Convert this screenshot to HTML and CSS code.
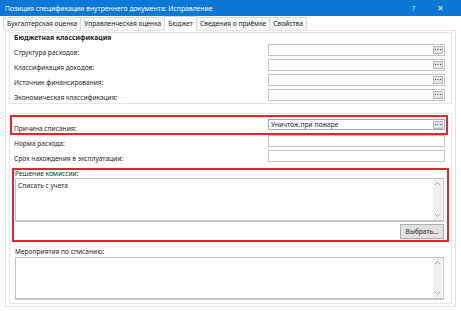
FILE: index.html
```html
<!DOCTYPE html>
<html lang="ru">
<head>
    <meta charset="UTF-8">
    <title>Позиция спецификации внутреннего документа: Исправление</title>
    <link rel="stylesheet" href="styles.css">
</head>
<body>

    <!-- Title bar -->
    <div class="titlebar">
        <span class="title">Позиция спецификации внутреннего документа: Исправление</span>
        <span class="help">?</span>
        <span class="close">✕</span>
    </div>

    <!-- Tabs -->
    <div class="tabs">
        <span class="tab">Бухгалтерская оценка</span>
        <span class="tab">Управленческая оценка</span>
        <span class="tab active">Бюджет</span>
        <span class="tab">Сведения о приёмке</span>
        <span class="tab">Свойства</span>
    </div>

    <div class="panel">

        <!-- Budget classification -->
        <div class="group">
            <div class="group-title">Бюджетная классификация</div>
            <div class="row">
                <span class="label">Структура расходов:</span>
                <div class="field"><span class="value"></span><span class="dots"><svg width="6" height="2" viewBox="0 0 6 2"><rect x="0" y="0" width="1" height="1" fill="#444"/><rect x="2.5" y="0" width="1" height="1" fill="#444"/><rect x="5" y="0" width="1" height="1" fill="#444"/></svg></span></div>
            </div>
            <div class="row">
                <span class="label">Классификация доходов:</span>
                <div class="field"><span class="value"></span><span class="dots"><svg width="6" height="2" viewBox="0 0 6 2"><rect x="0" y="0" width="1" height="1" fill="#444"/><rect x="2.5" y="0" width="1" height="1" fill="#444"/><rect x="5" y="0" width="1" height="1" fill="#444"/></svg></span></div>
            </div>
            <div class="row">
                <span class="label">Источник финансирования:</span>
                <div class="field"><span class="value"></span><span class="dots"><svg width="6" height="2" viewBox="0 0 6 2"><rect x="0" y="0" width="1" height="1" fill="#444"/><rect x="2.5" y="0" width="1" height="1" fill="#444"/><rect x="5" y="0" width="1" height="1" fill="#444"/></svg></span></div>
            </div>
            <div class="row">
                <span class="label">Экономическая классификация:</span>
                <div class="field"><span class="value"></span><span class="dots"><svg width="6" height="2" viewBox="0 0 6 2"><rect x="0" y="0" width="1" height="1" fill="#444"/><rect x="2.5" y="0" width="1" height="1" fill="#444"/><rect x="5" y="0" width="1" height="1" fill="#444"/></svg></span></div>
            </div>
        </div>

        <!-- Write-off -->
        <div class="group group-main">
            <div class="mark mark-reason">
                <div class="row row-reason">
                    <span class="label">Причина списания:</span>
                    <div class="field focused"><span class="value">Уничтож.при пожаре</span><span class="dots"><svg width="6" height="2" viewBox="0 0 6 2"><rect x="0" y="0" width="1" height="1" fill="#444"/><rect x="2.5" y="0" width="1" height="1" fill="#444"/><rect x="5" y="0" width="1" height="1" fill="#444"/></svg></span></div>
                </div>
            </div>
            <div class="row row-plain">
                <span class="label">Норма расхода:</span>
                <div class="field"></div>
            </div>
            <div class="row row-plain">
                <span class="label">Срок нахождения в эксплуатации:</span>
                <div class="field"></div>
            </div>

            <div class="mark mark-decision">
                <div class="caption">Решение комиссии:</div>
                <div class="memo memo-decision">
                    <span class="memo-text">Списать с учета</span>
                    <div class="scroll">
                        <svg width="7" height="5" viewBox="0 0 7 5"><path d="M1 4 L3.5 1.5 L6 4" fill="none" stroke="#a8a8a8" stroke-width="1"/></svg>
                        <svg width="7" height="5" viewBox="0 0 7 5"><path d="M1 1 L3.5 3.5 L6 1" fill="none" stroke="#a8a8a8" stroke-width="1"/></svg>
                    </div>
                </div>
                <div class="actions">
                    <button class="pick">Выбрать...</button>
                </div>
            </div>

            <div class="caption caption-events">Мероприятия по списанию:</div>
            <div class="memo memo-events">
                <span class="memo-text"></span>
                <div class="scroll">
                    <svg width="7" height="5" viewBox="0 0 7 5"><path d="M1 4 L3.5 1.5 L6 4" fill="none" stroke="#a8a8a8" stroke-width="1"/></svg>
                    <svg width="7" height="5" viewBox="0 0 7 5"><path d="M1 1 L3.5 3.5 L6 1" fill="none" stroke="#a8a8a8" stroke-width="1"/></svg>
                </div>
            </div>
        </div>

    </div>

</body>
</html>
```

FILE: styles.css
```css
body {
    margin: 0;
    font-family: "Noto Sans", sans-serif;
    font-size: 6.6px;
    color: #262626;
    background: #ffffff;
}

/* Title bar */
.titlebar {
    height: 16px;
    display: flex;
    align-items: center;
    padding: 0 0 0 5px;
    background: #0b78d5;
    color: #ffffff;
    font-size: 6.8px;
}

.help {
    margin-left: auto;
    width: 27px;
    text-align: center;
    color: #cfe3f6;
    font-size: 7.5px;
}

.close {
    width: 27px;
    text-align: center;
    margin-right: 7px;
    color: #e6f0fa;
    font-size: 7.5px;
}

/* Tabs */
.tabs {
    height: 14px;
    display: flex;
    align-items: flex-end;
    padding-left: 3px;
}

.tab {
    height: 12px;
    line-height: 12px;
    padding: 0 3px;
    border: 1px solid #d9d9d9;
    border-bottom: none;
    margin-right: -1px;
    background: #f5f5f5;
    white-space: nowrap;
}

.tab.active {
    height: 14px;
    line-height: 14px;
    background: #ffffff;
    position: relative;
    z-index: 1;
    margin-bottom: -1px;
}

/* Content */
.panel {
    margin: 0 5px;
    padding: 1px 3px 2px;
    border: 1px solid #e3e3e3;
}

.group {
    border: 1px solid #e6e6e6;
}

.group-title {
    height: 10px;
    line-height: 10px;
    padding-left: 4px;
    font-weight: bold;
    font-size: 6.8px;
    color: #1e1e1e;
}

.row {
    display: flex;
    align-items: flex-start;
    height: 15px;
    padding: 0 6px 0 4px;
}

.label {
    flex: 1;
    padding-top: 4px;
    line-height: 11px;
    white-space: nowrap;
}

.field {
    width: 177px;
    height: 12px;
    margin-top: 1px;
    box-sizing: border-box;
    border: 1px solid #c4c4c4;
    display: flex;
    align-items: center;
}

.value {
    flex: 1;
    padding-left: 2px;
    line-height: 10px;
}

.dots {
    width: 10px;
    height: 8px;
    margin-right: 1px;
    box-sizing: border-box;
    background: #e4e4e4;
    border: 1px solid #b8b8b8;
    display: flex;
    align-items: center;
    justify-content: center;
}

.dots svg {
    display: block;
}

.field.focused {
    border-color: #7fb3e6;
}

.group-main {
    margin-top: 9px;
    padding: 1px 0 3px;
}

/* Red highlight frames */
.mark {
    border: 2px solid #e3262f;
}

.mark-reason {
    margin-right: 3px;
}

.row-reason {
    height: 16px;
    padding: 0 1px 0 2px;
}

.row-reason .label {
    padding-top: 6px;
}

.row-reason .field {
    margin-top: 2px;
    height: 11px;
}

.row-plain .label {
    padding-top: 3px;
}

.row-plain .field {
    margin-top: 0;
}

.mark-decision {
    margin: 3px 2px 0;
    padding: 0 3px 1px 1px;
}

.caption {
    line-height: 8px;
    padding-left: 0;
}

.caption-events {
    margin: 5px 0 0 5px;
    line-height: 10px;
}

.memo {
    display: flex;
    box-sizing: border-box;
    border: 1px solid #c4c4c4;
    border-bottom-width: 2px;
}

.memo-decision {
    height: 44px;
}

.memo-events {
    height: 43px;
    margin: 0 7px 0 5px;
}

.memo-text {
    flex: 1;
    padding: 2px 0 0 2px;
}

.scroll {
    width: 9px;
    background: #f0f0f0;
    display: flex;
    flex-direction: column;
    justify-content: space-between;
    align-items: center;
    padding: 2px 0;
    margin-right: 1px;
}

.actions {
    display: flex;
    justify-content: flex-end;
    margin-top: 2px;
}

.pick {
    width: 44px;
    height: 15px;
    padding: 0;
    border: 1px solid #adadad;
    background: #e1e1e1;
    font-family: "Noto Sans", sans-serif;
    font-size: 6.6px;
    color: #262626;
}
```
